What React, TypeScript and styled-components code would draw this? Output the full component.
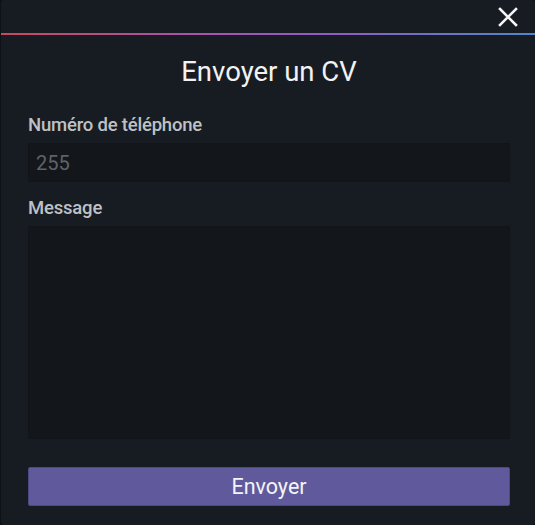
import { styled, createGlobalStyle } from "styled-components";

const Global = createGlobalStyle`
  html, body {
    margin: 0;
    padding: 0;
    background: #0f1216;
  }
  * { box-sizing: border-box; }
`;

const Modal = styled.div`
  width: 535px;
  height: 525px;
  background: #171c22;
  border-radius: 4px;
  border-left: 1px solid #0e1115;
  display: flex;
  flex-direction: column;
  font-family: Roboto, "Liberation Sans", sans-serif;
  overflow: hidden;
`;

const TopBar = styled.div`
  height: 33px;
  display: flex;
  justify-content: flex-end;
  align-items: center;
  padding-right: 16px;
`;

const CloseButton = styled.button`
  background: none;
  border: none;
  padding: 0;
  width: 22px;
  height: 22px;
  display: flex;
  align-items: center;
  justify-content: center;
  cursor: pointer;
  margin-top: 1px;
`;

const GradientLine = styled.div`
  height: 2px;
  background: linear-gradient(90deg, #c84a5c 0%, #a455b0 40%, #8a5fc4 65%, #4f86cc 100%);
`;

const Body = styled.form`
  flex: 1;
  display: flex;
  flex-direction: column;
  padding: 0 25px 0 27px;
`;

const Title = styled.h2`
  margin: 20px 0 0;
  text-align: center;
  font-size: 27.5px;
  font-weight: 400;
  color: #f2f2f2;
  line-height: 34px;
`;

const Label = styled.label<{ $top: number }>`
  display: block;
  margin-top: ${(p) => p.$top}px;
  font-size: 18.5px;
  font-weight: 500;
  color: #bfc1c4;
  line-height: 22px;
  letter-spacing: -0.2px;
`;

const Field = styled.input`
  margin-top: 7px;
  height: 39px;
  width: 100%;
  background: #13171b;
  border: 1px solid #111419;
  border-radius: 2px;
  padding: 0 7px;
  font-family: inherit;
  font-size: 20px;
  color: #d0d0d0;
  outline: none;
  &::placeholder { color: #5f6368; }
`;

const Area = styled.textarea`
  margin-top: 7px;
  height: 213px;
  width: 100%;
  background: #13171b;
  border: 1px solid #111419;
  border-radius: 2px;
  resize: none;
  outline: none;
  font-family: inherit;
  color: #d0d0d0;
`;

const Submit = styled.button`
  margin-top: 28px;
  height: 39px;
  width: 100%;
  background: #605a9c;
  border: 1px solid #4e4984;
  border-radius: 2px;
  color: #f4f4f8;
  font-family: inherit;
  font-size: 21.5px;
  font-weight: 400;
  cursor: pointer;
`;

export default function App() {
  return (
    <>
      <Global />
      <Modal>
        <TopBar>
          <CloseButton type="button" aria-label="Fermer">
            <svg width="20" height="20" viewBox="0 0 20 20">
              <path d="M2 2 L18 18 M18 2 L2 18" stroke="#f4f4f4" strokeWidth="2.6" strokeLinecap="square" />
            </svg>
          </CloseButton>
        </TopBar>
        <GradientLine />
        <Body onSubmit={(e) => e.preventDefault()}>
          <Title>Envoyer un CV</Title>
          <Label $top={25}>Numéro de téléphone</Label>
          <Field placeholder="255" />
          <Label $top={15}>Message</Label>
          <Area />
          <Submit type="submit">Envoyer</Submit>
        </Body>
      </Modal>
    </>
  );
}
